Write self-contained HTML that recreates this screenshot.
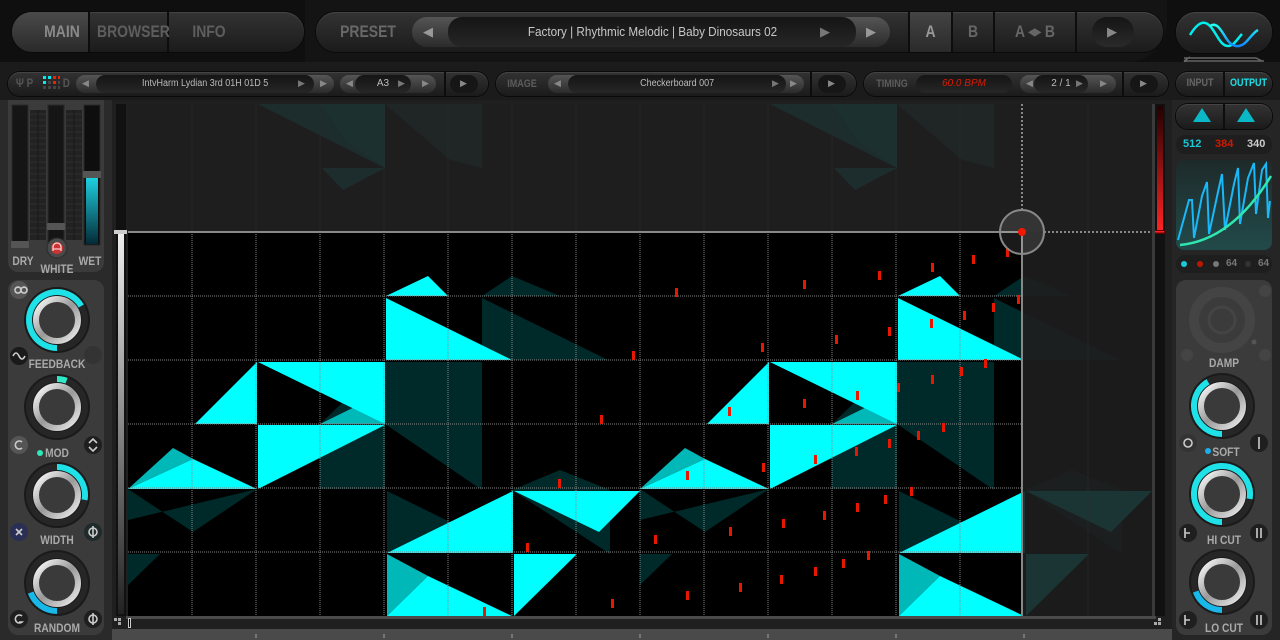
<!DOCTYPE html>
<html><head><meta charset="utf-8"><style>
*{margin:0;padding:0;box-sizing:border-box}
body{width:1280px;height:640px;overflow:hidden;background:#1d1d1d;font-family:"Liberation Sans",sans-serif;position:relative}
.a{position:absolute}
.pill{position:absolute;border-radius:20px;background:linear-gradient(#333,#1b1b1b);box-shadow:inset 0 1px 0 #444,0 0 0 1px #0a0a0a}
.lbl{position:absolute;color:#7a7a7a;font-weight:bold;text-align:center;transform:scaleX(0.82)}
.disp{position:absolute;border-radius:14px;background:linear-gradient(#151515,#262626);color:#bbb;text-align:center}
.box{position:absolute;background:#3b3b3b;border-radius:10px}
.klbl{position:absolute;color:#aaa;font-weight:bold;font-size:12px;text-align:center;width:80px;transform:scaleX(0.85)}
.dt{display:inline-block;transform:scaleX(0.9)}
</style></head><body>
<div class="a" style="left:0;top:0;width:1280px;height:62px;background:#0f0f0f"></div>
<div class="a" style="left:305px;top:0;width:862px;height:62px;background:#141414;border-radius:0 0 40px 0"></div>
<div class="pill" style="left:12px;top:12px;width:292px;height:40px"></div>
<div class="a" style="left:12px;top:12px;width:76px;height:40px;border-radius:20px 0 0 20px;background:linear-gradient(#4a4a4a,#2a2a2a)"></div>
<div class="a" style="left:88px;top:12px;width:2px;height:40px;background:#0d0d0d"></div>
<div class="a" style="left:167px;top:12px;width:2px;height:40px;background:#0d0d0d"></div>
<div class="lbl" style="left:12px;top:22px;width:100px;font-size:17px;color:#8a8a8a">MAIN</div>
<div class="lbl" style="left:90px;top:22px;width:78px;font-size:17px;color:#5e5e5e">BROWSER</div>
<div class="lbl" style="left:169px;top:22px;width:80px;font-size:17px;color:#5e5e5e">INFO</div>

<div class="pill" style="left:316px;top:12px;width:847px;height:40px"></div>
<div class="lbl" style="left:328px;top:22px;width:80px;font-size:17px;color:#686868">PRESET</div>
<div class="a" style="left:412px;top:17px;width:478px;height:30px;border-radius:15px;background:linear-gradient(#555,#2b2b2b)"></div>
<div class="disp" style="left:448px;top:17px;width:408px;height:30px;line-height:30px;font-size:13px;color:#c8c8c8"><span class="dt">Factory | Rhythmic Melodic | Baby Dinosaurs 02</span></div>
<div class="a" style="left:423px;top:24px;color:#999;font-size:13px">◀</div>
<div class="a" style="left:820px;top:24px;color:#777;font-size:13px">▶</div>
<div class="a" style="left:866px;top:24px;color:#999;font-size:13px">▶</div>
<div class="a" style="left:908px;top:12px;width:2px;height:40px;background:#0d0d0d"></div>
<div class="a" style="left:910px;top:12px;width:41px;height:40px;background:linear-gradient(#444,#2a2a2a)"></div>
<div class="a" style="left:951px;top:12px;width:2px;height:40px;background:#0d0d0d"></div>
<div class="a" style="left:993px;top:12px;width:2px;height:40px;background:#0d0d0d"></div>
<div class="a" style="left:1075px;top:12px;width:2px;height:40px;background:#0d0d0d"></div>
<div class="lbl" style="left:910px;top:22px;width:41px;font-size:17px;color:#999">A</div>
<div class="lbl" style="left:953px;top:22px;width:40px;font-size:17px;color:#666">B</div>
<div class="lbl" style="left:995px;top:22px;width:80px;font-size:17px;color:#666">A <span style="font-size:10px;vertical-align:2px">◀▶</span> B</div>
<div class="a" style="left:1092px;top:17px;width:42px;height:30px;border-radius:15px;background:linear-gradient(#151515,#2a2a2a)"></div>
<div class="a" style="left:1107px;top:24px;color:#888;font-size:13px">▶</div>

<div class="pill" style="left:1176px;top:12px;width:96px;height:41px"></div>
<svg class="a" style="left:1176px;top:12px" width="96" height="41"><defs><linearGradient id="sg" x1="0" y1="0" x2="0" y2="1"><stop offset="0" stop-color="#2fe"/><stop offset="1" stop-color="#18f"/></linearGradient></defs>
<path d="M14,23 C22,10 28,8 34,14 C40,20 44,34 52,34 C58,34 62,26 66,22" fill="none" stroke="#0ee" stroke-width="2.5"/>
<path d="M34,14 C40,10 44,16 50,26 C56,36 64,36 70,30 C74,26 78,20 82,18" fill="none" stroke="url(#sg)" stroke-width="2.5"/></svg>
<svg class="a" style="left:1176px;top:55px" width="96" height="12"><path d="M8,6H88M8,6l6,-4M8,6l6,4M8,3H80l6,3" fill="none" stroke="#666" stroke-width="1.5"/></svg>

<div class="a" style="left:0;top:62px;width:1280px;height:38px;background:#1b1b1b"></div>
<div class="pill" style="left:8px;top:72px;width:480px;height:24px;border-radius:12px"></div>
<div class="lbl" style="left:14px;top:76px;font-size:12px;color:#555">Ψ P</div>
<svg class="a" style="left:42px;top:75px" width="18" height="18">
<rect x="1" y="1" width="3" height="3" fill="#0ee"/><rect x="6" y="1" width="3" height="3" fill="#0ee"/><rect x="11" y="1" width="3" height="3" fill="#e20"/><rect x="16" y="1" width="2" height="3" fill="#e20"/>
<rect x="1" y="6" width="3" height="3" fill="#0ee"/><rect x="6" y="6" width="3" height="3" fill="#444"/><rect x="11" y="6" width="3" height="3" fill="#e20"/><rect x="16" y="6" width="2" height="3" fill="#444"/>
<rect x="1" y="11" width="3" height="3" fill="#444"/><rect x="6" y="11" width="3" height="3" fill="#444"/><rect x="11" y="11" width="3" height="3" fill="#444"/><rect x="16" y="11" width="2" height="3" fill="#444"/></svg>
<div class="lbl" style="left:62px;top:76px;font-size:12px;color:#555">D</div>
<div class="a" style="left:76px;top:75px;width:258px;height:18px;border-radius:9px;background:linear-gradient(#555,#2b2b2b)"></div>
<div class="disp" style="left:96px;top:75px;width:218px;height:18px;line-height:18px;font-size:10px"><span class="dt">IntvHarm Lydian 3rd 01H 01D 5</span></div>
<div class="a" style="left:82px;top:78px;color:#888;font-size:9px">◀</div><div class="a" style="left:298px;top:78px;color:#777;font-size:9px">▶</div><div class="a" style="left:320px;top:78px;color:#888;font-size:9px">▶</div>
<div class="a" style="left:340px;top:75px;width:96px;height:18px;border-radius:9px;background:linear-gradient(#555,#2b2b2b)"></div>
<div class="disp" style="left:355px;top:75px;width:56px;height:18px;line-height:18px;font-size:10px">A3</div>
<div class="a" style="left:346px;top:78px;color:#888;font-size:9px">◀</div><div class="a" style="left:398px;top:78px;color:#777;font-size:9px">▶</div><div class="a" style="left:422px;top:78px;color:#888;font-size:9px">▶</div>
<div class="a" style="left:444px;top:72px;width:2px;height:24px;background:#0d0d0d"></div>
<div class="a" style="left:450px;top:75px;width:28px;height:18px;border-radius:9px;background:#161616"></div><div class="a" style="left:460px;top:78px;color:#888;font-size:9px">▶</div>

<div class="pill" style="left:496px;top:72px;width:360px;height:24px;border-radius:12px"></div>
<div class="lbl" style="left:500px;top:78px;width:44px;font-size:11px;color:#5c5c5c">IMAGE</div>
<div class="a" style="left:548px;top:75px;width:256px;height:18px;border-radius:9px;background:linear-gradient(#555,#2b2b2b)"></div>
<div class="disp" style="left:568px;top:75px;width:218px;height:18px;line-height:18px;font-size:10px"><span class="dt">Checkerboard 007</span></div>
<div class="a" style="left:554px;top:78px;color:#888;font-size:9px">◀</div><div class="a" style="left:772px;top:78px;color:#777;font-size:9px">▶</div><div class="a" style="left:790px;top:78px;color:#888;font-size:9px">▶</div>
<div class="a" style="left:810px;top:72px;width:2px;height:24px;background:#0d0d0d"></div>
<div class="a" style="left:818px;top:75px;width:28px;height:18px;border-radius:9px;background:#161616"></div><div class="a" style="left:828px;top:78px;color:#888;font-size:9px">▶</div>

<div class="pill" style="left:864px;top:72px;width:304px;height:24px;border-radius:12px"></div>
<div class="lbl" style="left:870px;top:78px;width:44px;font-size:11px;color:#5c5c5c">TIMING</div>
<div class="disp" style="left:916px;top:75px;width:96px;height:18px;line-height:18px;font-size:10px;color:#e01a00;font-style:italic">60.0 BPM</div>
<div class="a" style="left:1020px;top:75px;width:96px;height:18px;border-radius:9px;background:linear-gradient(#555,#2b2b2b)"></div>
<div class="disp" style="left:1034px;top:75px;width:54px;height:18px;line-height:18px;font-size:10px">2 / 1</div>
<div class="a" style="left:1026px;top:78px;color:#888;font-size:9px">◀</div><div class="a" style="left:1076px;top:78px;color:#777;font-size:9px">▶</div><div class="a" style="left:1100px;top:78px;color:#888;font-size:9px">▶</div>
<div class="a" style="left:1122px;top:72px;width:2px;height:24px;background:#0d0d0d"></div>
<div class="a" style="left:1130px;top:75px;width:28px;height:18px;border-radius:9px;background:#161616"></div><div class="a" style="left:1140px;top:78px;color:#888;font-size:9px">▶</div>

<div class="pill" style="left:1176px;top:72px;width:96px;height:24px;border-radius:12px"></div>
<div class="a" style="left:1223px;top:72px;width:2px;height:24px;background:#0d0d0d"></div>
<div class="lbl" style="left:1176px;top:77px;width:48px;font-size:11px;color:#666">INPUT</div>
<div class="lbl" style="left:1225px;top:77px;width:47px;font-size:11px;color:#1de0e8">OUTPUT</div>

<div class="a" style="left:0;top:100px;width:112px;height:540px;background:#2a2a2a"></div>
<div class="box" style="left:8px;top:100px;width:96px;height:172px;border-radius:0 0 10px 10px"></div>
<div class="box" style="left:8px;top:280px;width:96px;height:355px"></div>
<svg class="a" style="left:0;top:100px" width="112" height="540">
<rect x="12" y="5" width="16" height="140" fill="#151515" stroke="#2a2a2a"/>
<rect x="48" y="5" width="16" height="140" fill="#151515" stroke="#2a2a2a"/>
<rect x="84" y="5" width="16" height="140" fill="#0e0e0e" stroke="#2a2a2a"/>
<rect x="30" y="10" width="16" height="130" fill="#222"/><rect x="66" y="10" width="16" height="130" fill="#222"/>
<g stroke="#2e2e2e" stroke-width="1"><path d="M30,14H46M30,20H46M30,26H46M30,32H46M30,38H46M30,44H46M30,50H46M30,56H46M30,62H46M30,68H46M30,74H46M30,80H46M30,86H46M30,92H46M30,98H46M30,104H46M30,110H46M30,116H46M30,122H46M30,128H46M30,134H46"/>
<path d="M66,14H82M66,20H82M66,26H82M66,32H82M66,38H82M66,44H82M66,50H82M66,56H82M66,62H82M66,68H82M66,74H82M66,80H82M66,86H82M66,92H82M66,98H82M66,104H82M66,110H82M66,116H82M66,122H82M66,128H82M66,134H82"/>
<path d="M38,10V140M74,10V140" stroke="#181818"/></g>
<defs><linearGradient id="wg" x1="0" y1="0" x2="0" y2="1"><stop offset="0" stop-color="#1ed0e0"/><stop offset="1" stop-color="#042a36"/></linearGradient></defs>
<rect x="86" y="78" width="12" height="66" fill="url(#wg)"/>
<rect x="11" y="141" width="18" height="7" rx="1" fill="#555"/>
<rect x="47" y="123" width="18" height="7" rx="1" fill="#555"/>
<rect x="83" y="71" width="18" height="7" rx="1" fill="#555"/>
<circle cx="57" cy="148" r="10" fill="#4a4a4a" stroke="#2a2a2a"/><circle cx="57" cy="148" r="6" fill="#c33"/><path d="M53,151v-4a4,4 0 0 1 8,0v4M53,149h8" stroke="#fcc" stroke-width="1.3" fill="none"/>
</svg>
<div class="klbl" style="left:-17px;top:254px;width:80px">DRY</div>
<div class="klbl" style="left:17px;top:262px">WHITE</div>
<div class="klbl" style="left:50px;top:254px">WET</div>

<svg class="a" style="left:0;top:270px" width="112" height="370">
<defs><linearGradient id="kr" x1="0" y1="0" x2="1" y2="1"><stop offset="0" stop-color="#fff"/><stop offset="0.5" stop-color="#999"/><stop offset="1" stop-color="#eee"/></linearGradient>
<g id="kb"><circle r="33" fill="#1a1a1a"/><circle r="28" fill="none" stroke="#262626" stroke-width="6"/><circle r="21" fill="#3a3a3a" stroke="url(#kr)" stroke-width="6"/></g></defs>
<circle cx="19" cy="20" r="9" fill="#555"/><circle cx="19" cy="86" r="9" fill="#1a1a1a"/><circle cx="19" cy="175" r="9" fill="#555"/><circle cx="93" cy="175" r="9" fill="#1f1f1f"/><circle cx="19" cy="262" r="9" fill="#2a2f55"/><circle cx="93" cy="262" r="9" fill="#1f2a2a"/><circle cx="19" cy="349" r="9" fill="#1f1f1f"/><circle cx="93" cy="349" r="9" fill="#1f1f1f"/>
<g fill="none" stroke="#ccc" stroke-width="1.6"><path d="M15,20a3,3 0 1 1 0,0.1M21,20a3,3 0 1 1 0,0.1"/><path d="M13,86c2,-4 4,-4 6,0s4,4 6,0"/><path d="M22,172a4,4 0 1 0 0,6"/><path d="M89,173l4,-4 4,4M89,177l4,4 4,-4"/><path d="M16,259l6,6M22,259l-6,6"/><circle cx="93" cy="262" r="4"/><path d="M93,256v12"/><path d="M22,346a4,4 0 1 0 0,6h-3"/><circle cx="93" cy="349" r="4"/><path d="M93,343v12"/></g>
<circle cx="40" cy="183" r="3" fill="#2ee8b8"/>
<circle cx="93" cy="85" r="9" fill="#333"/>
<use href="#kb" x="57" y="50"/><path transform="translate(57,50)" d="M0,28 A28,28 0 1 1 24.25,-14" fill="none" stroke="#1ee2e8" stroke-width="6"/>
<use href="#kb" x="57" y="137"/><path transform="translate(57,137)" d="M0,-28 A28,28 0 0 1 9.58,-26.31" fill="none" stroke="#2ee8c8" stroke-width="6"/>
<use href="#kb" x="57" y="225"/><path transform="translate(57,225)" d="M0,-28 A28,28 0 0 1 27.57,4.86" fill="none" stroke="#1ee2e8" stroke-width="6"/>
<use href="#kb" x="57" y="313"/><path transform="translate(57,313)" d="M0,28 A28,28 0 0 1 -26.31,9.58" fill="none" stroke="#18b8e8" stroke-width="6"/>
</svg>
<div class="klbl" style="left:17px;top:357px">FEEDBACK</div>
<div class="klbl" style="left:17px;top:446px">MOD</div>
<div class="klbl" style="left:17px;top:533px">WIDTH</div>
<div class="klbl" style="left:17px;top:621px">RANDOM</div>

<svg class="a" style="left:112px;top:100px" width="1060" height="540" viewBox="112 100 1060 540">
<defs>
<clipPath id="cv"><rect x="128" y="232" width="1024" height="384"/></clipPath>
<linearGradient id="ls" x1="0" y1="0" x2="0" y2="1"><stop offset="0" stop-color="#eee"/><stop offset="1" stop-color="#222"/></linearGradient>
<linearGradient id="rs" x1="0" y1="0" x2="0" y2="1"><stop offset="0" stop-color="#200"/><stop offset="1" stop-color="#f22"/></linearGradient>
<g id="sh">
<g fill="#00ffff" fill-opacity="0.16">
<polygon points="482,296 512,276 560,296"/><polygon points="482,298 482,360 608,360"/>
<polygon points="385,362 482,362 482,490 385,424"/><polygon points="128,489 193,532 257,489 128,520"/>
<polygon points="387,491 513,553 387,553"/><polygon points="320,424 385,362 385,489 320,489"/>
<polygon points="512,490 560,470 610,490 610,554"/><polygon points="128,554 160,554 128,585"/>
</g>
<g fill="#00b8b8"><polygon points="128,489 173,448 193,459"/><polygon points="387,554 428,576 387,616"/><polygon points="320,424 385,392 385,424"/></g>
<g fill="#00ffff">
<polygon points="386,296 428,276 448,296"/><polygon points="386,298 386,360 512,360"/>
<polygon points="195,424 257,362 257,424"/><polygon points="258,362 385,362 385,424"/>
<polygon points="258,425 385,425 258,489"/><polygon points="128,489 193,459 257,489"/>
<polygon points="387,553 513,491 513,553"/><polygon points="514,491 640,491 599,532"/>
<polygon points="514,554 577,554 514,616"/><polygon points="387,616 428,576 512,616"/>
</g></g>
<g id="tp">
<polygon points="258,104 385,104 385,168" fill="#1d2d2d"/>
<polygon points="320,104 385,104 385,168 345,140" fill="#1c3030"/>
<polygon points="322,168 385,168 343,190" fill="#1d2d2d"/>
<polygon points="385,104 482,104 482,168 450,160" fill="#202626"/>
</g>
</defs>
<rect x="112" y="100" width="1060" height="540" fill="#1f1f1f"/>
<rect x="128" y="232" width="1024" height="384" fill="#000"/>
<rect x="128" y="104" width="1024" height="128" fill="#1e1e1e"/>
<use href="#tp"/><use href="#tp" x="512"/>
<g clip-path="url(#cv)"><use href="#sh"/><use href="#sh" x="512"/></g>
<rect x="1023" y="232" width="129" height="384" fill="#1e1e1e" fill-opacity="0.9"/>
<g stroke="#888" stroke-width="1" stroke-dasharray="1 1">
<path d="M192,232V616M256,232V616M320,232V616M384,232V616M448,232V616M512,232V616M576,232V616M640,232V616M704,232V616M768,232V616M832,232V616M896,232V616M960,232V616"/>
<path d="M128,296H1022M128,360H1022M128,424H1022M128,488H1022M128,552H1022"/>
</g>
<g stroke="#2c2c2c" stroke-dasharray="1 1"><path d="M192,104V232M256,104V232M320,104V232M384,104V232M448,104V232M512,104V232M576,104V232M640,104V232M704,104V232M768,104V232M832,104V232M896,104V232M960,104V232M1088,104V616"/></g>
<g fill="#e81800">
<rect x="675" y="288" width="3" height="9"/><rect x="803" y="280" width="3" height="9"/><rect x="878" y="271" width="3" height="9"/><rect x="931" y="263" width="3" height="9"/><rect x="972" y="255" width="3" height="9"/><rect x="1006" y="248" width="3" height="9"/>
<rect x="1017" y="295" width="3" height="9"/><rect x="992" y="303" width="3" height="9"/><rect x="963" y="311" width="3" height="9"/><rect x="930" y="319" width="3" height="9"/><rect x="888" y="327" width="3" height="9"/><rect x="835" y="335" width="3" height="9"/><rect x="761" y="343" width="3" height="9"/><rect x="632" y="351" width="3" height="9"/>
<rect x="984" y="359" width="3" height="9"/><rect x="960" y="367" width="3" height="9"/><rect x="931" y="375" width="3" height="9"/><rect x="897" y="383" width="3" height="9"/><rect x="856" y="391" width="3" height="9"/><rect x="803" y="399" width="3" height="9"/><rect x="728" y="407" width="3" height="9"/><rect x="600" y="415" width="3" height="9"/>
<rect x="942" y="423" width="3" height="9"/><rect x="917" y="431" width="3" height="9"/><rect x="888" y="439" width="3" height="9"/><rect x="855" y="447" width="3" height="9"/><rect x="814" y="455" width="3" height="9"/><rect x="762" y="463" width="3" height="9"/><rect x="686" y="471" width="3" height="9"/><rect x="558" y="479" width="3" height="9"/>
<rect x="910" y="487" width="3" height="9"/><rect x="884" y="495" width="3" height="9"/><rect x="856" y="503" width="3" height="9"/><rect x="823" y="511" width="3" height="9"/><rect x="782" y="519" width="3" height="9"/><rect x="729" y="527" width="3" height="9"/><rect x="654" y="535" width="3" height="9"/><rect x="526" y="543" width="3" height="9"/>
<rect x="867" y="551" width="3" height="9"/><rect x="842" y="559" width="3" height="9"/><rect x="814" y="567" width="3" height="9"/><rect x="780" y="575" width="3" height="9"/><rect x="739" y="583" width="3" height="9"/><rect x="686" y="591" width="3" height="9"/><rect x="611" y="599" width="3" height="9"/><rect x="483" y="607" width="3" height="9"/>
</g>
<path d="M128,232H1022V616" fill="none" stroke="#888" stroke-width="2"/>
<g stroke="#888" stroke-dasharray="2 2" stroke-width="2"><path d="M1022,104V210M1044,232H1152"/></g>
<circle cx="1022" cy="232" r="22" fill="#fff" fill-opacity="0.1" stroke="#888" stroke-width="2"/>
<circle cx="1022" cy="232" r="4" fill="#f21800"/>
<rect x="116" y="104" width="10" height="512" fill="#111"/>
<rect x="118" y="234" width="6" height="380" fill="url(#ls)"/>
<rect x="114" y="230" width="13" height="4" fill="#ccc"/>
<rect x="1155" y="104" width="10" height="512" fill="#111"/>
<rect x="1157" y="106" width="6" height="124" fill="url(#rs)"/>
<rect x="1153" y="230" width="13" height="4" fill="#600"/><rect x="1155" y="231" width="9" height="1.5" fill="#f22"/>
<rect x="1152" y="104" width="3" height="514" fill="#3a3a3a"/>
<rect x="126" y="616" width="1030" height="3" fill="#4a4a4a"/>
<rect x="126" y="619" width="1030" height="10" fill="#1f1f1f"/>
<rect x="112" y="629" width="1060" height="11" fill="#4a4a4a"/>
<rect x="128" y="618" width="3" height="10" fill="#ccc"/><rect x="129" y="619" width="1" height="8" fill="#000"/>
<g fill="#777"><rect x="255" y="634" width="2" height="4"/><rect x="383" y="634" width="2" height="4"/><rect x="511" y="634" width="2" height="4"/><rect x="639" y="634" width="2" height="4"/><rect x="767" y="634" width="2" height="4"/><rect x="895" y="634" width="2" height="4"/><rect x="1023" y="634" width="2" height="4"/></g>
<g fill="#aaa"><rect x="114" y="618" width="3" height="3"/><rect x="118" y="618" width="3" height="3"/><rect x="118" y="622" width="3" height="3"/><rect x="1158" y="618" width="3" height="3"/><rect x="1154" y="622" width="3" height="3"/><rect x="1158" y="622" width="3" height="3"/></g>
</svg>

<div class="a" style="left:1172px;top:100px;width:108px;height:540px;background:#252525"></div>
<div class="pill" style="left:1176px;top:104px;width:96px;height:25px;border-radius:12px"></div>
<div class="a" style="left:1223px;top:104px;width:2px;height:25px;background:#0d0d0d"></div>
<svg class="a" style="left:1176px;top:104px" width="96" height="25"><polygon points="26,4 35,18 17,18" fill="#0ab8c8"/><polygon points="70,4 79,18 61,18" fill="#0ab8c8"/></svg>
<div class="a" style="left:1176px;top:135px;width:96px;height:19px;border-radius:9px;background:#1e1e1e"></div>
<div class="a" style="left:1183px;top:138px;font-size:11px;font-weight:bold;color:#1ac8d8">512</div>
<div class="a" style="left:1215px;top:138px;font-size:11px;font-weight:bold;color:#d01800">384</div>
<div class="a" style="left:1247px;top:138px;font-size:11px;font-weight:bold;color:#ccc">340</div>
<svg class="a" style="left:1172px;top:156px" width="104" height="96">
<defs><linearGradient id="gb" x1="0" y1="0" x2="0" y2="1"><stop offset="0" stop-color="#1e2a2a"/><stop offset="1" stop-color="#224a4a"/></linearGradient></defs>
<rect x="4" y="4" width="96" height="90" rx="8" fill="url(#gb)"/>
<polyline points="6,84 17,44 20,44 22,82 30,40 35,26 37,78 46,36 50,18 53,74 62,28 66,12 68,68 76,22 82,7 84,58 90,14 94,8 96,62 98,45" fill="none" stroke="#1ab8f8" stroke-width="2"/>
<path d="M8,89 Q60,84 99,20" fill="none" stroke="#2ee8b0" stroke-width="2.5"/>
</svg>
<div class="a" style="left:1176px;top:255px;width:96px;height:18px;border-radius:9px;background:#1e1e1e"></div>
<svg class="a" style="left:1176px;top:255px" width="96" height="18"><circle cx="8" cy="9" r="3" fill="#1ac8d8"/><circle cx="24" cy="9" r="3" fill="#c01800"/><circle cx="40" cy="9" r="3" fill="#777"/><circle cx="72" cy="9" r="3" fill="#333"/></svg>
<div class="a" style="left:1226px;top:258px;font-size:10px;font-weight:bold;color:#777">64</div>
<div class="a" style="left:1258px;top:258px;font-size:10px;font-weight:bold;color:#777">64</div>
<div class="box" style="left:1176px;top:280px;width:96px;height:355px"></div>
<svg class="a" style="left:1172px;top:270px" width="108" height="370">
<defs><linearGradient id="kr2" x1="0" y1="0" x2="1" y2="1"><stop offset="0" stop-color="#fff"/><stop offset="0.5" stop-color="#999"/><stop offset="1" stop-color="#eee"/></linearGradient>
<g id="kb2"><circle r="33" fill="#1a1a1a"/><circle r="28" fill="none" stroke="#262626" stroke-width="6"/><circle r="21" fill="#3a3a3a" stroke="url(#kr2)" stroke-width="6"/></g></defs>
<circle cx="50" cy="50" r="28" fill="none" stroke="#444" stroke-width="10"/><circle cx="50" cy="50" r="13" fill="none" stroke="#444" stroke-width="3"/>
<circle cx="93" cy="21" r="6" fill="#444"/><circle cx="15" cy="85" r="6" fill="#444"/><circle cx="93" cy="85" r="6" fill="#444"/><circle cx="82" cy="72" r="2.5" fill="#555"/>
<circle cx="16" cy="173" r="9" fill="#333"/><circle cx="87" cy="173" r="9" fill="#1f1f1f"/><circle cx="16" cy="263" r="9" fill="#1f1f1f"/><circle cx="87" cy="263" r="9" fill="#1f1f1f"/><circle cx="16" cy="350" r="9" fill="#1f1f1f"/><circle cx="87" cy="350" r="9" fill="#1f1f1f"/>
<g fill="none" stroke="#ccc" stroke-width="1.6"><circle cx="16" cy="173" r="4"/><path d="M87,167v12M13,258v10M13,263h5M13,345v10M13,350h5M85,258v10M89,258v10M85,345v10M89,345v10"/></g>
<circle cx="36" cy="181" r="3" fill="#1ab0f0"/>
<use href="#kb2" x="50" y="136"/><path transform="translate(50,136)" d="M0,28 A28,28 0 0 1 -14,-24.25" fill="none" stroke="#1ee2e8" stroke-width="6"/>
<use href="#kb2" x="50" y="224"/><path transform="translate(50,224)" d="M0,28 A28,28 0 1 1 27.57,4.86" fill="none" stroke="#1ee2e8" stroke-width="6"/>
<use href="#kb2" x="50" y="312"/><path transform="translate(50,312)" d="M0,28 A28,28 0 0 1 -26.31,9.58" fill="none" stroke="#18b8e8" stroke-width="6"/>
</svg>
<div class="klbl" style="left:1184px;top:356px">DAMP</div>
<div class="klbl" style="left:1186px;top:445px">SOFT</div>
<div class="klbl" style="left:1184px;top:533px">HI CUT</div>
<div class="klbl" style="left:1184px;top:621px">LO CUT</div>
</body></html>
